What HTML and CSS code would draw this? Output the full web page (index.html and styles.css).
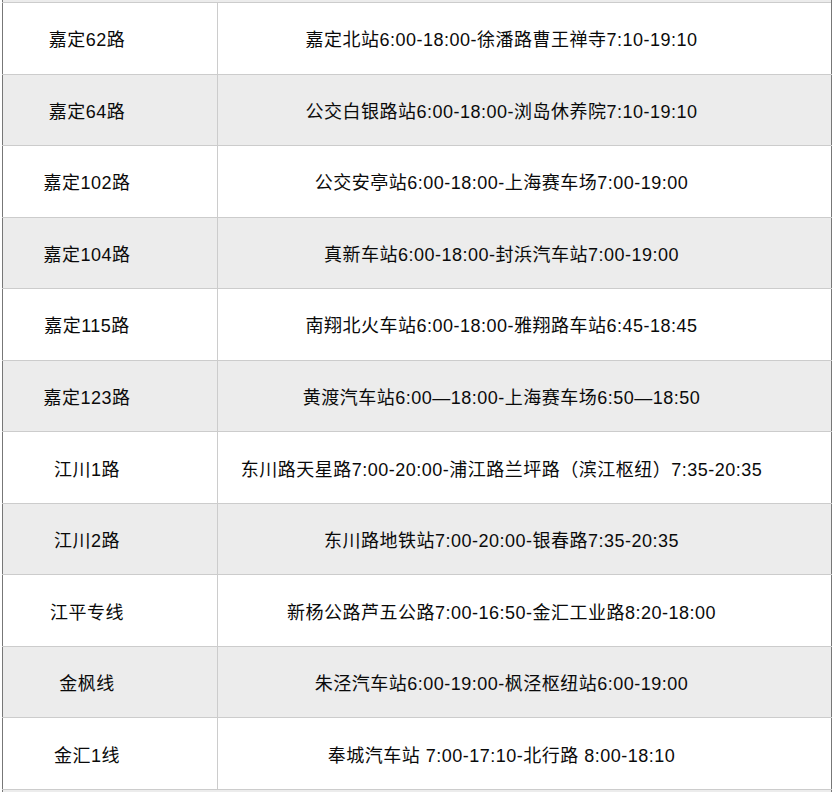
FILE: index.html
```html
<!DOCTYPE html>
<html lang="zh-CN">
<head>
<meta charset="utf-8">
<title>公交线路</title>
<link rel="stylesheet" href="styles.css">
</head>
<body>
<div class="page">
  <div class="strip"></div>
  <table class="routes">
    <colgroup><col class="c-name"><col class="c-time"></colgroup>
    <tbody>
      <tr><td>嘉定62路</td><td>嘉定北站6:00-18:00-徐潘路曹王禅寺7:10-19:10</td></tr>
      <tr class="alt"><td>嘉定64路</td><td>公交白银路站6:00-18:00-浏岛休养院7:10-19:10</td></tr>
      <tr><td>嘉定102路</td><td>公交安亭站6:00-18:00-上海赛车场7:00-19:00</td></tr>
      <tr class="alt"><td>嘉定104路</td><td>真新车站6:00-18:00-封浜汽车站7:00-19:00</td></tr>
      <tr><td>嘉定115路</td><td>南翔北火车站6:00-18:00-雅翔路车站6:45-18:45</td></tr>
      <tr class="alt"><td>嘉定123路</td><td>黄渡汽车站6:00—18:00-上海赛车场6:50—18:50</td></tr>
      <tr><td>江川1路</td><td>东川路天星路7:00-20:00-浦江路兰坪路（滨江枢纽）7:35-20:35</td></tr>
      <tr class="alt"><td>江川2路</td><td>东川路地铁站7:00-20:00-银春路7:35-20:35</td></tr>
      <tr class="sep"><td>江平专线</td><td>新杨公路芦五公路7:00-16:50-金汇工业路8:20-18:00</td></tr>
      <tr class="alt"><td>金枫线</td><td>朱泾汽车站6:00-19:00-枫泾枢纽站6:00-19:00</td></tr>
      <tr><td>金汇1线</td><td>奉城汽车站 7:00-17:10-北行路 8:00-18:10</td></tr>
    </tbody>
  </table>
  <div class="strip"></div>
</div>
</body>
</html>
```

FILE: styles.css
```css
html, body {
  margin: 0;
  padding: 0;
  background: #ffffff;
}
.page {
  padding-left: 2px;
  width: 830px;
  height: 792px;
  overflow: hidden;
}
.strip {
  box-sizing: border-box;
  height: 2px;
  background: #ececec;
  border-left: 1px solid #777777;
  border-right: 1px solid #777777;
}
.routes {
  width: 830px;
  border-collapse: collapse;
  table-layout: fixed;
  font-family: "Liberation Sans", "Noto Sans CJK SC", sans-serif;
  font-size: 18px;
  letter-spacing: 0.5px;
  color: #0a0a0a;
}
.c-name { width: 215px; }
.routes td {
  border: 1px solid #cccccc;
  height: 70.55px;
  padding: 0 46px 0 0;
  text-align: center;
  vertical-align: middle;
  white-space: nowrap;
}
.routes td:first-child { border-left-color: #777777; }
.routes td:last-child { border-right-color: #777777; }
.routes tr.alt td { background: #ececec; }
.routes tr.sep td { border-top-color: #777777; }
```
